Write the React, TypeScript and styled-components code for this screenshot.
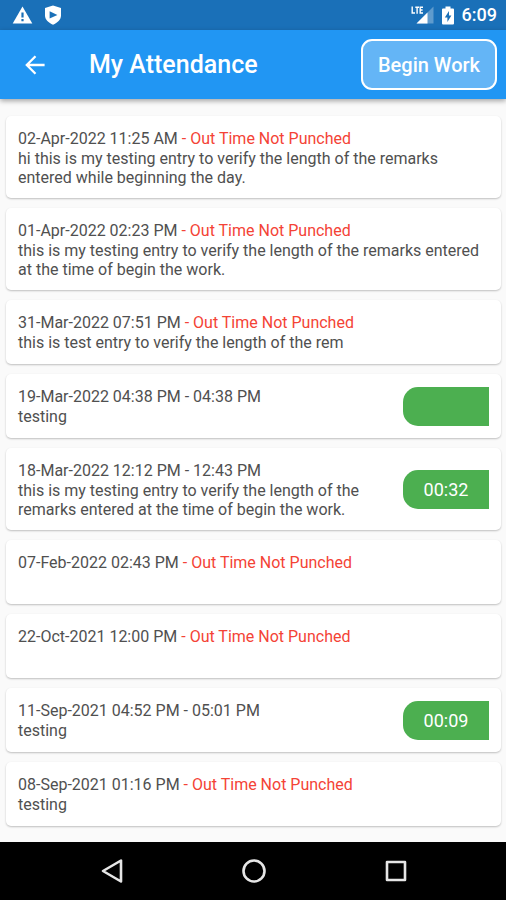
import React from "react";
import styled, { createGlobalStyle } from "styled-components";

const GlobalStyle = createGlobalStyle`
  *, *::before, *::after { box-sizing: border-box; }
  body {
    margin: 0;
    background: #fafafa;
    font-family: Roboto, "Liberation Sans", sans-serif;
    color: #505050;
  }
  h1, p, ul { margin: 0; padding: 0; }
  button { font: inherit; color: inherit; border: 0; padding: 0; background: none; cursor: pointer; }
  svg { display: block; }
`;

const Screen = styled.div`
  display: flex;
  flex-direction: column;
  min-height: 100vh;
`;

const StatusBar = styled.div`
  display: flex;
  align-items: center;
  justify-content: space-between;
  height: 30px;
  padding: 0 9px 0 12px;
  background: #1a70b8;
  color: #fff;
`;

const StatusGroup = styled.div<{ $gap: number }>`
  display: flex;
  align-items: center;
  gap: ${({ $gap }) => $gap}px;
`;

const Clock = styled.time`
  font-size: 18px;
  font-weight: 500;
  line-height: 30px;
`;

const AppBar = styled.header`
  display: flex;
  align-items: center;
  height: 69px;
  padding: 0 9px 0 20px;
  background: #2196f3;
  color: #fff;
  box-shadow: 0 2px 5px rgba(0, 0, 0, 0.35);
`;

const BackButton = styled.button`
  display: grid;
  place-items: center;
  width: 30px;
  height: 30px;
`;

const Title = styled.h1`
  flex: 1;
  margin-left: 39px;
  font-size: 25px;
  font-weight: 500;
  line-height: 30px;
`;

const BeginButton = styled.button`
  height: 51px;
  padding: 0 15px;
  border: 2px solid #fff;
  border-radius: 11px;
  background: #64b5f6;
  font-size: 20px;
  font-weight: 500;
`;

const Entries = styled.ul`
  flex: 1;
  display: flex;
  flex-direction: column;
  gap: 10px;
  padding: 17px 5px 15px 6px;
  list-style: none;
`;

const Entry = styled.li`
  display: flex;
  align-items: center;
  gap: 16px;
  min-height: 64px;
  padding: 12px 12px 11px;
  border-radius: 5px;
  background: #fff;
  box-shadow: 0 1px 2px rgba(0, 0, 0, 0.24);
`;

const Details = styled.div`
  flex: 1;
  align-self: flex-start;
  min-width: 0;
`;

const Period = styled.p`
  font-size: 16px;
  line-height: 21px;
`;

const Missing = styled.span`
  color: #f44336;
`;

const Remarks = styled.p`
  font-size: 16px;
  line-height: 19px;
`;

const Duration = styled.div`
  flex: none;
  width: 86px;
  height: 39px;
  border-radius: 15px 0 0 15px;
  background: #4caf50;
  color: #fff;
  font-size: 18px;
  line-height: 39px;
  text-align: center;
`;

const NavBar = styled.nav`
  display: flex;
  align-items: center;
  justify-content: center;
  gap: 112px;
  height: 58px;
  padding-left: 1px;
  background: #000;
`;

const NavButton = styled.button`
  display: grid;
  place-items: center;
  width: 30px;
  height: 30px;
`;

type EntryData = {
  start: string;
  end?: string;
  remarks?: string;
  duration?: string;
};

const longRemark =
  "this is my testing entry to verify the length of the remarks entered at the time of begin the work.";

const entries: EntryData[] = [
  {
    start: "02-Apr-2022 11:25 AM",
    remarks: "hi this is my testing entry to verify the length of the remarks entered while beginning the day.",
  },
  { start: "01-Apr-2022 02:23 PM", remarks: longRemark },
  { start: "31-Mar-2022 07:51 PM", remarks: "this is test entry to verify the length of the rem" },
  { start: "19-Mar-2022 04:38 PM", end: "04:38 PM", remarks: "testing", duration: "" },
  { start: "18-Mar-2022 12:12 PM", end: "12:43 PM", remarks: longRemark, duration: "00:32" },
  { start: "07-Feb-2022 02:43 PM" },
  { start: "22-Oct-2021 12:00 PM" },
  { start: "11-Sep-2021 04:52 PM", end: "05:01 PM", remarks: "testing", duration: "00:09" },
  { start: "08-Sep-2021 01:16 PM", remarks: "testing" },
];

const WarningIcon = () => (
  <svg width="21" height="18" viewBox="0 0 21 18" aria-hidden="true">
    <path d="M10.5 0.5 20.3 17.5H0.7Z" fill="#fff" />
    <path d="M9.4 6.5h2.2v5H9.4zM9.4 13h2.2v2.2H9.4z" fill="#1a70b8" />
  </svg>
);

const ShieldIcon = () => (
  <svg width="18" height="20" viewBox="0 0 18 20" aria-hidden="true">
    <path d="M9 0.4 17 3v7.5c0 4-3.6 7.5-8 9.2-4.4-1.7-8-5.2-8-9.2V3Z" fill="#fff" />
    <path d="M5.6 6.2 13.4 10l-7.8 3.6Z" fill="#1a70b8" />
  </svg>
);

const SignalIcon = () => (
  <svg width="23" height="20" viewBox="0 0 23 20" aria-hidden="true">
    <path d="M22.5 1.5V18.5H5.5Z" fill="#fff" fillOpacity="0.3" />
    <path d="M16.5 7.5V18.5H5.5Z" fill="#fff" />
    <path
      d="M1.2 1.5V8H4M4.3 2.2H8M6.1 2.2V8.7M12 2.2H9.2V8H12M9.2 5H11.6"
      fill="none"
      stroke="#fff"
      strokeWidth="1.4"
    />
  </svg>
);

const BatteryIcon = () => (
  <svg width="12" height="19" viewBox="0 0 12 19" aria-hidden="true">
    <path d="M3.5 0.5h5v2H11a1 1 0 0 1 1 1v14a1 1 0 0 1-1 1H1a1 1 0 0 1-1-1v-14a1 1 0 0 1 1-1h2.5Z" fill="#fff" />
    <path d="M7 5 2.8 11.5H5.4V16L9.4 9.6H7Z" fill="#1a70b8" />
  </svg>
);

const ArrowIcon = () => (
  <svg width="20" height="20" viewBox="0 0 20 20" fill="none" stroke="#fff" strokeWidth="2.3" aria-hidden="true">
    <path d="M19.6 10H2M10.5 1.2 1.8 10l8.7 8.8" />
  </svg>
);

const BackIcon = () => (
  <svg width="24" height="26" viewBox="0 0 24 26" fill="none" stroke="#e6e6e6" strokeWidth="2.6" strokeLinejoin="round" aria-hidden="true">
    <path d="M21 2.5V23.5L3 13Z" />
  </svg>
);

const HomeIcon = () => (
  <svg width="26" height="26" viewBox="0 0 26 26" fill="none" stroke="#e6e6e6" strokeWidth="2.6" aria-hidden="true">
    <circle cx="13" cy="13" r="10.5" />
  </svg>
);

const RecentIcon = () => (
  <svg width="22" height="22" viewBox="0 0 22 22" fill="none" stroke="#e6e6e6" strokeWidth="2.6" strokeLinejoin="round" aria-hidden="true">
    <path d="M2 2h18v18H2Z" />
  </svg>
);

export default function App() {
  return (
    <Screen>
      <GlobalStyle />
      <StatusBar>
        <StatusGroup $gap={11}>
          <WarningIcon />
          <ShieldIcon />
        </StatusGroup>
        <StatusGroup $gap={8}>
          <SignalIcon />
          <BatteryIcon />
          <Clock>6:09</Clock>
        </StatusGroup>
      </StatusBar>
      <AppBar>
        <BackButton aria-label="Back">
          <ArrowIcon />
        </BackButton>
        <Title>My Attendance</Title>
        <BeginButton>Begin Work</BeginButton>
      </AppBar>
      <Entries>
        {entries.map((entry) => (
          <Entry key={entry.start}>
            <Details>
              <Period>
                {entry.start}
                {entry.end ? ` - ${entry.end}` : <Missing> - Out Time Not Punched</Missing>}
              </Period>
              {entry.remarks && <Remarks>{entry.remarks}</Remarks>}
            </Details>
            {entry.duration !== undefined && <Duration>{entry.duration}</Duration>}
          </Entry>
        ))}
      </Entries>
      <NavBar>
        <NavButton aria-label="Navigate back">
          <BackIcon />
        </NavButton>
        <NavButton aria-label="Home">
          <HomeIcon />
        </NavButton>
        <NavButton aria-label="Recent apps">
          <RecentIcon />
        </NavButton>
      </NavBar>
    </Screen>
  );
}
